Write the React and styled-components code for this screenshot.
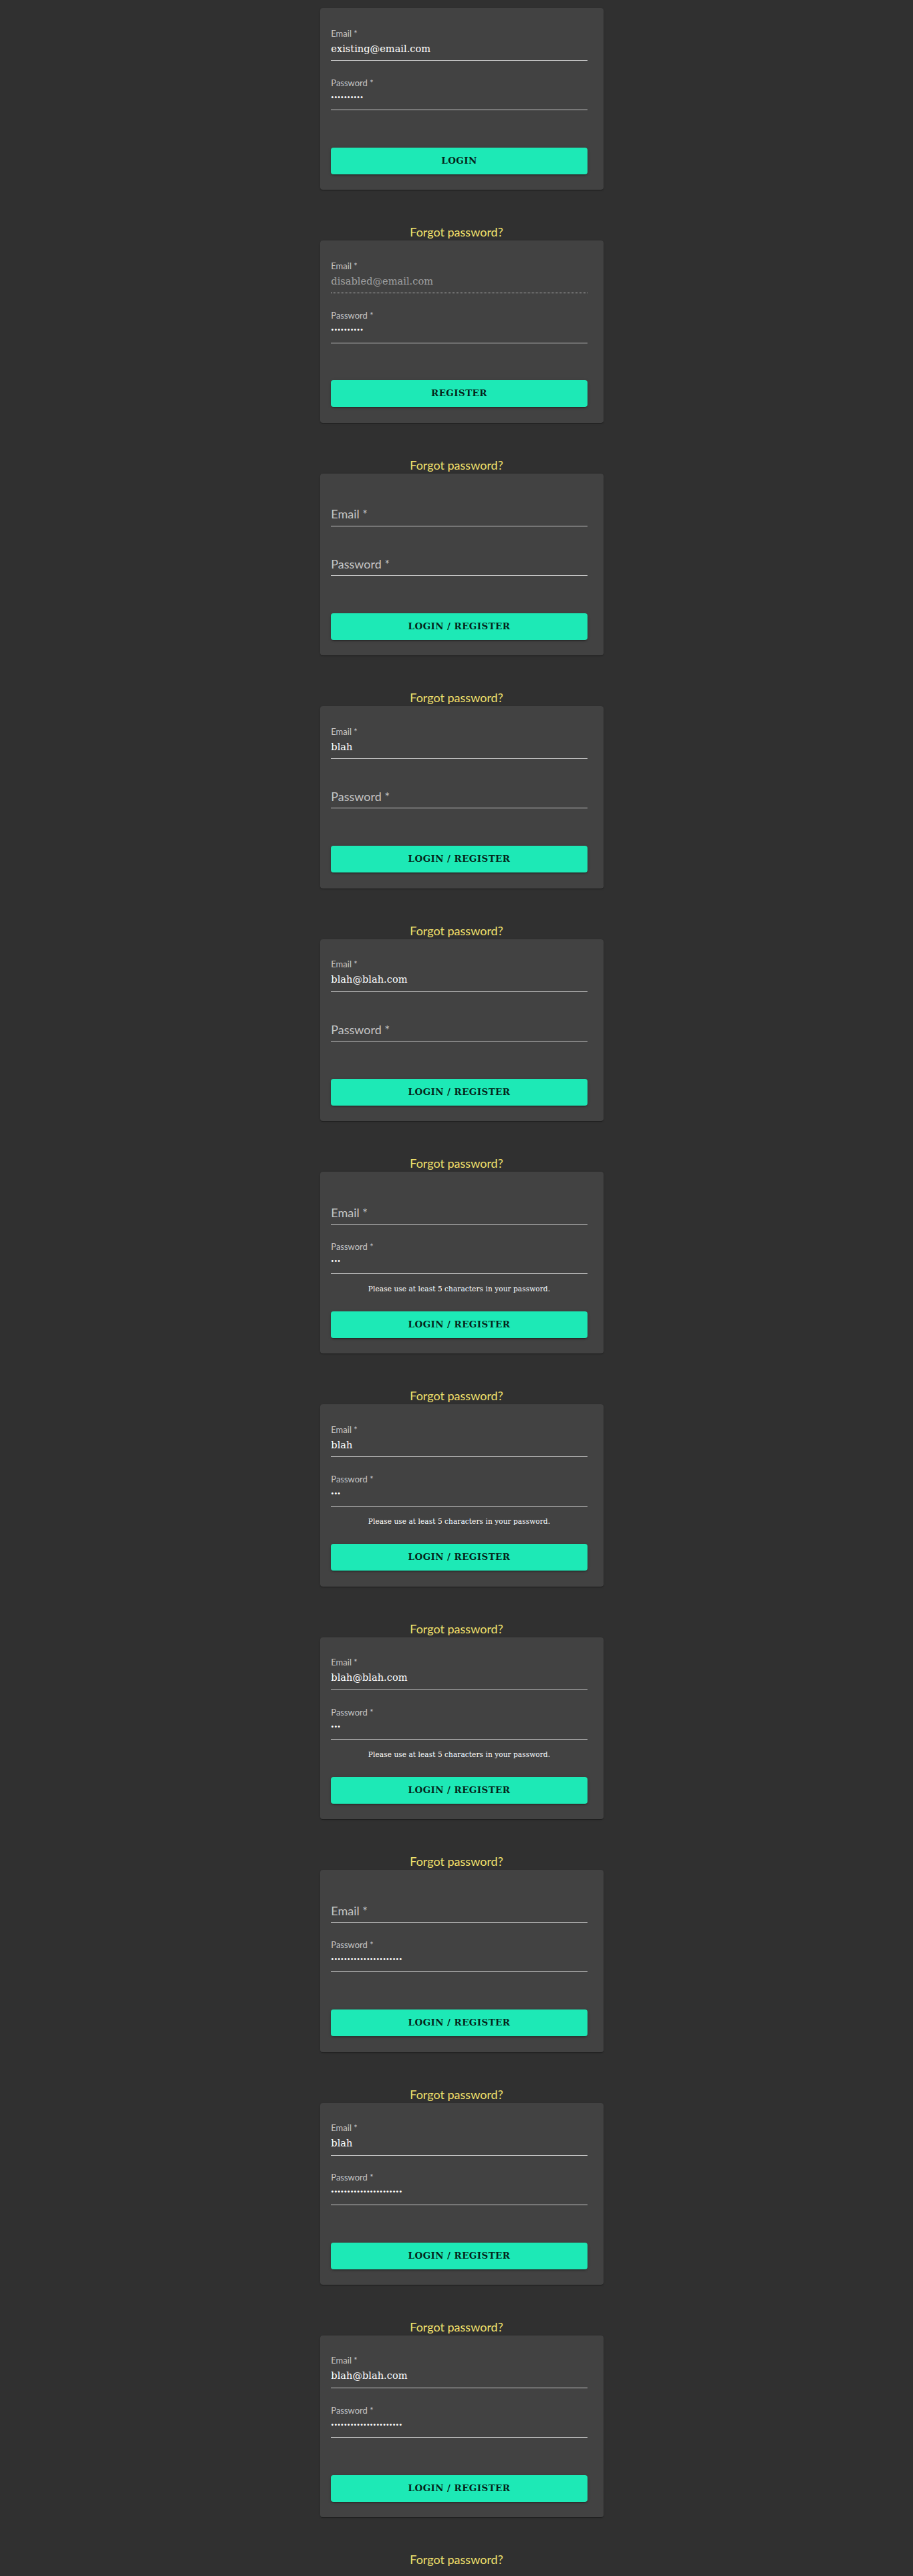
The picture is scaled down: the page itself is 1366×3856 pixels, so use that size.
import React from 'react';
import styled, { createGlobalStyle } from 'styled-components';

const GlobalStyle = createGlobalStyle`
  html, body {
    margin: 0;
    padding: 0;
    background: #303030;
  }
  body {
    font-family: Lato, "Noto Sans", sans-serif;
  }
  *, *::before, *::after {
    box-sizing: border-box;
  }
`;

const Page = styled.main`
  display: flex;
  flex-direction: column;
  align-items: center;
  padding: 12px 0 12px;
`;

const Story = styled.section`
  display: flex;
  flex-direction: column;
  align-items: center;
`;

const CardWrap = styled.div`
  padding-left: 16px;
`;

const Card = styled.form`
  width: 423.4px;
  height: 272.4px;
  background: #424242;
  border-radius: 4px;
  box-shadow: 0px 2px 1px -1px rgba(0, 0, 0, 0.2), 0px 1px 1px 0px rgba(0, 0, 0, 0.14),
    0px 1px 3px 0px rgba(0, 0, 0, 0.12);
  padding: 29.5px 24px 23.4px 16px;
  display: flex;
  flex-direction: column;
`;

const Field = styled.div`
  display: flex;
  flex-direction: column;
  margin-top: ${(p) => (p.$first ? '0' : '24.8px')};
`;

const LabelRow = styled.div`
  height: 16px;
  display: flex;
  align-items: flex-start;
`;

const InputRow = styled.div`
  height: 33.5px;
  display: flex;
  align-items: flex-end;
  border-bottom: 1px ${(p) => (p.$disabled ? 'dotted' : 'solid')} rgba(255, 255, 255, 0.7);
`;

const SmallLabel = styled.label`
  font-family: Lato, "Noto Sans", sans-serif;
  font-size: 13px;
  line-height: 16px;
  color: rgba(255, 255, 255, 0.7);
`;

const BigLabel = styled.label`
  font-family: Lato, "Noto Sans", sans-serif;
  font-size: 18px;
  line-height: 24px;
  margin-bottom: 5.3px;
  color: rgba(255, 255, 255, 0.7);
`;

const Input = styled.input`
  display: block;
  width: 100%;
  height: 26px;
  margin: 0 0 5px;
  padding: 0;
  border: 0;
  outline: none;
  background: transparent;
  color: ${(p) => (p.disabled ? 'rgba(255, 255, 255, 0.5)' : '#ffffff')};
  -webkit-text-fill-color: ${(p) => (p.disabled ? 'rgba(255, 255, 255, 0.5)' : '#ffffff')};
  font-family: ${(p) => (p.type === 'password' ? '"Liberation Serif", serif' : '"DejaVu Serif", serif')};
  font-size: ${(p) => (p.type === 'password' ? '12px' : '14.6px')};
  letter-spacing: ${(p) => (p.type === 'password' ? '0.65px' : '0')};
`;

const HelperSlot = styled.div`
  height: 55.7px;
  padding-top: 13.7px;
`;

const Helper = styled.p`
  margin: 0;
  font-family: "DejaVu Serif", serif;
  font-size: 10.6px;
  line-height: 16px;
  letter-spacing: 0.05px;
  text-align: center;
  color: #ffffff;
`;

const Button = styled.button`
  height: 40px;
  width: 100%;
  border: 0;
  border-radius: 4px;
  background: #1de9b6;
  color: rgba(0, 0, 0, 0.87);
  font-family: "DejaVu Serif", serif;
  font-weight: 700;
  font-size: 13.5px;
  letter-spacing: 0.4px;
  text-transform: uppercase;
  display: flex;
  align-items: center;
  justify-content: center;
  padding: 0 0 2px;
  cursor: pointer;
  box-shadow: 0px 3px 1px -2px rgba(0, 0, 0, 0.2), 0px 2px 2px 0px rgba(0, 0, 0, 0.14),
    0px 1px 5px 0px rgba(0, 0, 0, 0.12);
`;

const Forgot = styled.a`
  display: block;
  margin-top: 50px;
  font-family: Lato, "Noto Sans", sans-serif;
  font-size: 18px;
  line-height: 26px;
  color: #f2e16c;
  text-decoration: none;
  cursor: pointer;
`;

function TextField({ id, label, type = 'text', value, disabled, first }) {
  const filled = value && value.length > 0;
  return (
    <Field $first={first}>
      <LabelRow>{filled && <SmallLabel htmlFor={id}>{label} *</SmallLabel>}</LabelRow>
      <InputRow $disabled={disabled}>
        {filled ? (
          <Input id={id} type={type} defaultValue={value} disabled={disabled} readOnly />
        ) : (
          <BigLabel htmlFor={id}>{label} *</BigLabel>
        )}
      </InputRow>
    </Field>
  );
}

const stories = [
  { email: 'existing@email.com', pw: 10, button: 'Login' },
  { email: 'disabled@email.com', pw: 10, button: 'Register', disabled: true },
  { email: '', pw: 0 },
  { email: 'blah', pw: 0 },
  { email: 'blah@blah.com', pw: 0 },
  { email: '', pw: 3, helper: true },
  { email: 'blah', pw: 3, helper: true },
  { email: 'blah@blah.com', pw: 3, helper: true },
  { email: '', pw: 22 },
  { email: 'blah', pw: 22 },
  { email: 'blah@blah.com', pw: 22 },
];

export default function App() {
  return (
    <>
      <GlobalStyle />
      <Page>
        {stories.map((s, i) => (
          <Story key={i}>
            <CardWrap>
              <Card onSubmit={(e) => e.preventDefault()}>
                <TextField id={`email-${i}`} label="Email" value={s.email} disabled={s.disabled} first />
                <TextField id={`password-${i}`} label="Password" type="password" value={'x'.repeat(s.pw)} />
                <HelperSlot>
                  {s.helper && <Helper>Please use at least 5 characters in your password.</Helper>}
                </HelperSlot>
                <Button type="submit">{s.button || 'Login / Register'}</Button>
              </Card>
            </CardWrap>
            <Forgot>Forgot password?</Forgot>
          </Story>
        ))}
      </Page>
    </>
  );
}
